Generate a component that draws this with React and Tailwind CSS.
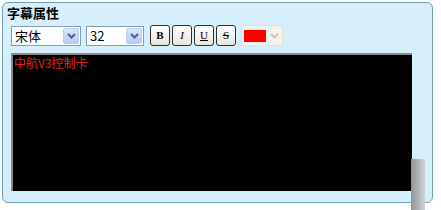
import React from 'react';

const cjk = { fontFamily: '"Noto Sans CJK SC", "Liberation Sans", sans-serif' };

const Chevron = ({ color = '#4d6185' }) => (
  <svg width="9" height="6" viewBox="0 0 9 6">
    <path d="M1 1 L4.5 4.5 L8 1" fill="none" stroke={color} strokeWidth="2" />
  </svg>
);

const Select = ({ value, width }) => (
  <div
    className="flex items-center h-[20px] border border-[#7f9db9] bg-white pl-[3px] pr-[1px]"
    style={{ width }}
  >
    <span className="flex-1 text-[13px] leading-none text-black" style={cjk}>{value}</span>
    <div className="w-[16px] h-[16px] rounded-[2px] bg-gradient-to-b from-[#dbe5fc] to-[#b7c9f6] border border-[#c0cff4] flex items-center justify-center">
      <Chevron />
    </div>
  </div>
);

const FmtButton = ({ children, className }) => (
  <div className="w-[20px] h-[21px] rounded-[3px] border border-[#2e2e2e] bg-gradient-to-b from-white to-[#e8e6dc] flex items-center justify-center">
    <span className={`text-[11px] leading-none text-black ${className}`} style={{ fontFamily: '"Liberation Serif", serif' }}>
      {children}
    </span>
  </div>
);

export default function App() {
  return (
    <div className="relative w-[441px] h-[210px] bg-white overflow-hidden">
      <div className="ml-[2px] mt-[2px] w-[431px] h-[201px] rounded-[6px] border border-[#6da2b3] bg-[#d6effb] flex flex-col">
        <div className="pl-[4px] pt-[2px] h-[19px] text-[13px] font-bold leading-[15px] text-black" style={cjk}>
          字幕属性
        </div>
        <div className="flex items-center pl-[8px] mt-[3px] h-[21px]">
          <Select value="宋体" width={70} />
          <div className="w-[5px]" />
          <Select value="32" width={58} />
          <div className="w-[6px]" />
          <div className="flex gap-[2px]">
            <FmtButton className="font-bold">B</FmtButton>
            <FmtButton className="italic">I</FmtButton>
            <FmtButton className="underline">U</FmtButton>
            <FmtButton className="line-through">S</FmtButton>
          </div>
          <div className="w-[5px]" />
          <div className="flex items-center h-[21px] w-[42px] border border-[#e2e0d6] bg-[#f4f3ee] pl-[2px]">
            <div className="w-[22px] h-[12px] bg-[#ff0000]" />
            <div className="flex-1 flex items-center justify-center">
              <Chevron color="#c9c7ba" />
            </div>
          </div>
        </div>
        <div className="ml-[8px] mt-[7px] w-[401px] h-[138px] bg-black border-t-2 border-l-2 border-t-[#8a8a8a] border-l-[#8a8a8a] pl-[1px] pt-[1px]">
          <div className="text-[12px] leading-[14px] text-[#e8231f]" style={cjk}>中航V3控制卡</div>
        </div>
      </div>
      <div className="absolute left-[411px] top-[159px] w-[14px] h-[51px] bg-gradient-to-r from-[#8e9598] to-[#d0d4d6]" />
    </div>
  );
}
